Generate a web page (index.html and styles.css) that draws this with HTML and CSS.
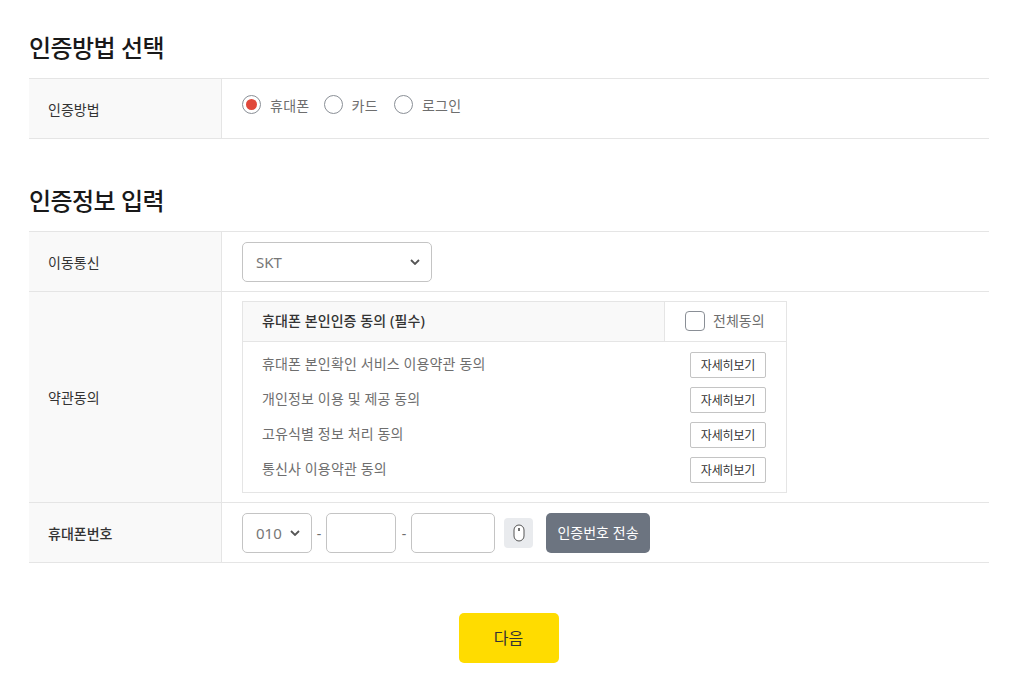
FILE: index.html
```html
<!DOCTYPE html>
<html lang="ko">
<head>
<meta charset="utf-8">
<title>인증</title>
<link rel="stylesheet" href="styles.css">
</head>
<body>
<main class="page">
  <h2 class="title">인증방법 선택</h2>
  <section class="form">
    <div class="row row-method">
      <div class="label">인증방법</div>
      <div class="cell radios">
        <label class="radio"><span class="dot on"></span><span class="radio-text">휴대폰</span></label>
        <label class="radio radio-short"><span class="dot"></span><span class="radio-text">카드</span></label>
        <label class="radio"><span class="dot"></span><span class="radio-text">로그인</span></label>
      </div>
    </div>
  </section>
  <h2 class="title second">인증정보 입력</h2>
  <section class="form">
    <div class="row">
      <div class="label">이동통신</div>
      <div class="cell">
        <div class="select carrier">SKT
          <svg class="chev" width="10" height="6" viewBox="0 0 10 6"><path d="M1 1l4 4 4-4" fill="none" stroke="#555" stroke-width="1.8"/></svg>
        </div>
      </div>
    </div>
    <div class="row">
      <div class="label">약관동의</div>
      <div class="cell terms-cell">
        <div class="terms">
          <div class="terms-head">
            <strong class="terms-title">휴대폰 본인인증 동의 (필수)</strong>
            <label class="all"><span class="check"></span><span class="all-text">전체동의</span></label>
          </div>
          <ul class="terms-list">
            <li class="term"><span>휴대폰 본인확인 서비스 이용약관 동의</span><button class="more">자세히보기</button></li>
            <li class="term"><span>개인정보 이용 및 제공 동의</span><button class="more">자세히보기</button></li>
            <li class="term"><span>고유식별 정보 처리 동의</span><button class="more">자세히보기</button></li>
            <li class="term"><span>통신사 이용약관 동의</span><button class="more">자세히보기</button></li>
          </ul>
        </div>
      </div>
    </div>
    <div class="row">
      <div class="label strong">휴대폰번호</div>
      <div class="cell phone">
        <div class="select prefix">010
          <svg class="chev" width="10" height="6" viewBox="0 0 10 6"><path d="M1 1l4 4 4-4" fill="none" stroke="#555" stroke-width="1.8"/></svg>
        </div>
        <span class="dash">-</span>
        <div class="field mid"></div>
        <span class="dash">-</span>
        <div class="field last"></div>
        <span class="mouse">
          <svg width="12" height="18" viewBox="0 0 12 18"><rect x="1" y="1" width="10" height="16" rx="5" fill="#fff" stroke="#555"/><path d="M6 4v3" stroke="#333" stroke-width="1.4"/></svg>
        </span>
        <button class="send">인증번호 전송</button>
      </div>
    </div>
  </section>
  <div class="actions"><button class="next">다음</button></div>
</main>
</body>
</html>
```
FILE: styles.css
```css
* { box-sizing: border-box; }
html, body { margin: 0; padding: 0; background: #fff; }
body {
  font-family: "Noto Sans", "Noto Sans CJK KR", sans-serif;
  font-size: 14px;
  color: #6e6e6e;
  overflow: hidden;
}
.page { padding: 30px 25px 0 29px; }
.title {
  margin: 0 0 12px;
  height: 36px;
  font-family: "Noto Sans CJK KR", sans-serif;
  font-size: 24px;
  line-height: 33px;
  font-weight: 500;
  color: #191919;
  letter-spacing: -0.6px;
}
.second { margin-top: 44px; }
.form { border-top: 1px solid #e5e5e5; }
.row {
  display: grid;
  grid-template-columns: 193px 1fr;
  border-bottom: 1px solid #e5e5e5;
}
.label {
  display: flex;
  align-items: center;
  padding: 2px 0 0 19px;
  background: #f9f9f9;
  border-right: 1px solid #e5e5e5;
  color: #333;
  line-height: 20px;
}
.strong { font-weight: 500; }
.cell { padding: 10px 20px 9px; display: flex; align-items: center; }
.radios { gap: 14px; height: 59px; padding-bottom: 16px; padding-top: 7px; }
.radio { display: flex; align-items: center; gap: 9px; }
.radio-short { margin-right: 2px; }
.radio-text { padding-top: 2px; letter-spacing: 0.3px; }
.dot {
  width: 19px; height: 19px; border: 1px solid #8a8f96; border-radius: 50%;
  display: flex; align-items: center; justify-content: center; background: #fff;
}
.dot.on::after { content: ""; width: 11px; height: 11px; border-radius: 50%; background: #e0483a; }
.select, .field {
  height: 40px; border: 1px solid #c4c4c4; border-radius: 5px; background: #fff;
}
.select { display: flex; align-items: center; justify-content: space-between; font-size: 15px; color: #777; }
.carrier { width: 190px; padding: 0 11px 0 13px; }
.prefix { width: 70px; padding: 0 11px 0 13px; }
.terms-cell { padding-top: 9px; padding-bottom: 9px; }
.terms { width: 545px; border: 1px solid #e5e5e5; }
.terms-head { display: flex; height: 40px; border-bottom: 1px solid #e5e5e5; }
.terms-title {
  flex: 1; display: flex; align-items: center; padding: 0 0 3px 19px;
  background: #f9f9f9; border-right: 1px solid #e5e5e5;
  font-weight: 500; color: #333; font-size: 14px; letter-spacing: 0.1px;
}
.all { width: 122px; margin-left: -1px; display: flex; align-items: center; gap: 8px; padding-left: 21px; }
.all-text { padding-bottom: 3px; }
.check { width: 20px; height: 20px; border: 1px solid #8a8f96; border-radius: 4px; margin-bottom: 1px; }
.terms-list { list-style: none; margin: 0; padding: 10px 20px 9px 19px; display: flex; flex-direction: column; gap: 9px; }
.term { display: flex; align-items: center; justify-content: space-between; height: 26px; }
.term span { padding-bottom: 4px; letter-spacing: 0.14px; }
.more {
  width: 76px; height: 26px; padding: 0 0 2px; background: #fff;
  border: 1px solid #c4c4c4; border-radius: 2px;
  font: 12px "Noto Sans CJK KR", sans-serif; color: #333; letter-spacing: -0.15px;
}
.dash { width: 14px; text-align: center; }
.mid { width: 70px; margin-right: 1px; }
.last { width: 84px; }
.mouse {
  width: 29px; height: 30px; margin: 0 13px 0 9px; border-radius: 4px; background: #e9ebee;
  display: flex; align-items: center; justify-content: center;
}
.send {
  width: 104px; height: 40px; border: 0; border-radius: 5px; background: #6c7480; color: #fff;
  font: 14px "Noto Sans CJK KR", sans-serif; padding: 0 0 2px;
}
.actions { display: flex; justify-content: center; margin-top: 50px; padding-right: 1px; }
.next {
  width: 100px; height: 50px; border: 0; border-radius: 5px; background: #ffdc00; color: #333;
  font: 16px "Noto Sans CJK KR", sans-serif; padding: 0 0 2px;
}
```
